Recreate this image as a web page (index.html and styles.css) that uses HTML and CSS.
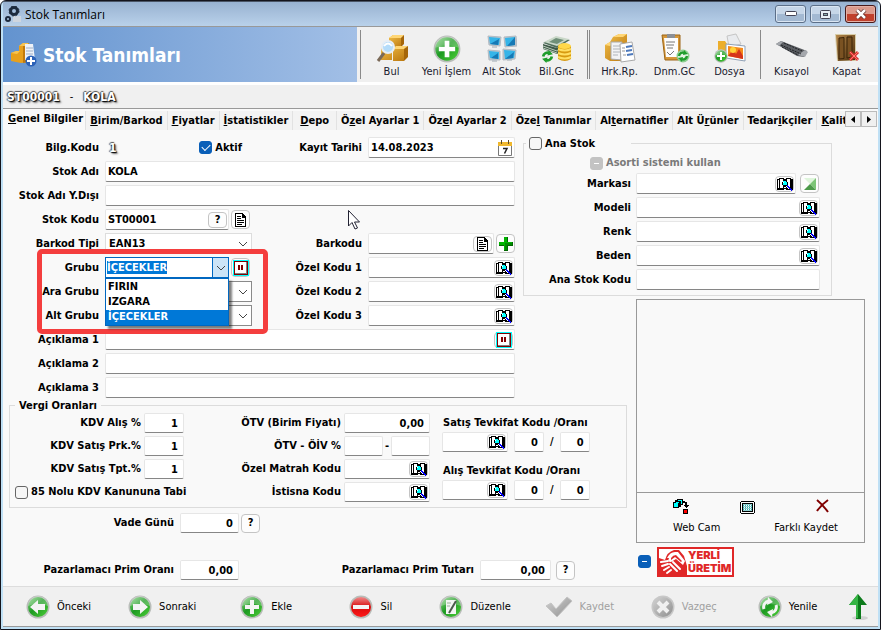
FILE: index.html
```html
<!DOCTYPE html>
<html lang="tr">
<head>
    <meta charset="UTF-8">
    <meta name="viewport" content="width=device-width, initial-scale=1.0">
    <title>Stok Tanımları</title>
    <link rel="stylesheet" href="styles.css">
</head>
<body>
    <!-- ikonlar -->
    <svg class="sprite" aria-hidden="true">
        <defs>
            <linearGradient id="green" x1="0" y1="0" x2="1" y2="1">
                <stop offset="0" stop-color="#8fd88a"/>
                <stop offset=".45" stop-color="#1d9a22"/>
                <stop offset="1" stop-color="#4fd03a"/>
            </linearGradient>
            <linearGradient id="red" x1="0" y1="0" x2="0" y2="1">
                <stop offset="0" stop-color="#f08a8a"/>
                <stop offset=".5" stop-color="#d80c0c"/>
                <stop offset="1" stop-color="#ff1a1a"/>
            </linearGradient>
            <linearGradient id="gray" x1="0" y1="0" x2="1" y2="1">
                <stop offset="0" stop-color="#d2d2d2"/>
                <stop offset="1" stop-color="#8f8f8f"/>
            </linearGradient>
            <linearGradient id="gold" x1="0" y1="0" x2="1" y2="1">
                <stop offset="0" stop-color="#f3c04a"/>
                <stop offset="1" stop-color="#b8740c"/>
            </linearGradient>
            <linearGradient id="wood" x1="0" y1="0" x2="1" y2="1">
                <stop offset="0" stop-color="#b5874a"/>
                <stop offset="1" stop-color="#4a2d0c"/>
            </linearGradient>
        </defs>
        <symbol id="book" viewBox="0 0 16 14" shape-rendering="crispEdges">
            <path fill="#000" d="M2 1h5v1h2V1h5v1h2v11H9v-1H7v1H0V2h2z"/>
            <path fill="#fff" d="M1 3h1v8H1zM3 2h3v9H3zM10 2h3v9h-3zM7 10h2v1H7z"/>
            <path fill="#000" d="M6 3h3v1h1v1h1v3h-1v1H6V8H5V5h1z"/>
            <path fill="#0ff" d="M6 4h3v1h1v3H6z"/>
            <path fill="#fff" d="M6 5h1v1H6zM9 9h1v1h1v1h1v1h-1v-1h-1v-1H9z"/>
            <path fill="#00f" d="M10 8h1v1h1v1h1v1h1v1h1v2h-1v-1h-1v-1h-1v-1h-1v-1h-1z"/>
        </symbol>
        <symbol id="page" viewBox="0 0 12 14" shape-rendering="crispEdges">
            <path fill="#000" d="M1 0h7v1h1v1h1v1h1v11H0V0z"/>
            <path fill="#fff" d="M1 1h6v4h3v8H1z"/>
            <path fill="#000" d="M2 3h4v1H2zM2 5h4v1H2zM2 7h7v1H2zM2 9h7v1H2zM2 11h5v1H2zM8 2h1v2H8z"/>
        </symbol>
        <symbol id="pause" viewBox="0 0 16 16" shape-rendering="crispEdges">
            <path fill="#0ff" d="M0 0h16v16H0z"/>
            <path fill="#800000" d="M1 1h14v14H1z"/>
            <path fill="#808080" d="M2 2h12v12H2z"/>
            <path fill="#fff" d="M2 2h11v11H2z"/>
            <path fill="#800000" d="M5 5h2v5H5zM8 5h2v5H8z"/>
        </symbol>
        <symbol id="plus" viewBox="0 0 14 14" shape-rendering="crispEdges">
            <path fill="#060" d="M5 0h4v5h5v4H9v5H5V9H0V5h5z"/>
            <path fill="#00b400" d="M5 0h3v5h5v3H8v5H5V8H0V5h5z"/>
            <path fill="#008a00" d="M6 6h7v2H8v5H6z"/>
        </symbol>
        <symbol id="chevron" viewBox="0 0 10 6">
            <path d="M1 1l4 4 4-4" fill="none" stroke="#444"/>
        </symbol>
        <symbol id="calendar" viewBox="0 0 14 16">
            <path fill="#fff" stroke="#777" d="M.5 3.500h13v12H.5z"/>
            <path fill="#f0b82e" d="M0 2h14v4H0z"/>
            <path fill="#5b4a2a" d="M3 0h1v4H3zM10 0h1v4h-1z"/>
            <path d="M5 8.500h4l-2.500 5" fill="none" stroke="#222" stroke-width="1.500"/>
        </symbol>
        <symbol id="ball" viewBox="0 0 24 24">
            <circle cx="12" cy="12" r="11.500" fill="#b9bdb9"/>
            <circle cx="12" cy="12" r="10" fill="url(#green)"/>
            <path fill="#fff" opacity=".25" d="M2 11a10 10 0 0 1 20 0q-10-4-20 0z"/>
        </symbol>
        <symbol id="boxes" viewBox="0 0 32 28">
            <path fill="url(#gold)" d="M13 3l4-3h11l-3 3v9H13z"/>
            <path fill="#ffd675" d="M13 3l4-3h11l-3 3z"/>
            <path fill="#a5660a" d="M25 3l3-3v9l-3 3z"/>
            <path fill="url(#gold)" d="M5 14l4-3h9l-2 3v11H5zM17 14l3-3h12l-4 3v12H17z"/>
            <path fill="#ffd675" d="M5 14l4-3h9l-2 3zM17 14l3-3h12l-4 3z"/>
            <path fill="#a5660a" d="M28 14l4-3v11l-4 4z"/>
        </symbol>
        <symbol id="cycle" viewBox="0 0 12 12">
            <path fill="none" stroke="#1f9d2c" stroke-width="2.500" d="M2 6a4 4 0 0 1 6-3M10 6a4 4 0 0 1-6 3"/>
            <path fill="#1f9d2c" d="M7 0l4 4-5 1zM5 12L1 8l5-1z"/>
        </symbol>
    </svg>

    <div class="window">
        <header class="titlebar">
            <svg width="17" height="17" viewBox="0 0 17 17">
                <path fill="#cfd6df" d="M8 10h8v6H8z"/>
                <circle cx="9" cy="5" r="3.500" fill="none" stroke="#1d2a3d" stroke-width="3"/>
                <circle cx="9" cy="5" r="5" fill="none" stroke="#1d2a3d" stroke-width="1" stroke-dasharray="2 2"/>
                <circle cx="3" cy="13" r="2" fill="none" stroke="#1d2a3d" stroke-width="2"/>
            </svg>
            <span class="caption">Stok Tanımları</span>
            <div class="window-buttons">
                <button aria-label="Küçült"><svg width="12" height="6"><rect x=".5" y=".5" width="11" height="4" rx="1" fill="#fff" stroke="#445"/></svg></button>
                <button aria-label="Büyüt"><svg width="11" height="9"><rect x=".5" y=".5" width="10" height="8" rx="1" fill="#e8eef5" stroke="#445"/><rect x="3.500" y="3.500" width="4" height="2" fill="#8aa" stroke="#445"/></svg></button>
                <button class="close" aria-label="Pencereyi kapat"><svg width="12" height="10"><path d="M2 1l8 8M10 1L2 9" stroke="#5a2a26" stroke-width="4"/><path d="M2 1l8 8M10 1L2 9" stroke="#fff" stroke-width="2.500"/></svg></button>
            </div>
        </header>

        <div class="toolbar">
            <div class="banner">
                <svg width="26" height="24" viewBox="0 0 26 24">
                    <path fill="#e8a01c" d="M0 10l5-2h3V3l4-3h6v19l-8 1-10-2z"/>
                    <path fill="#c27a0c" d="M12 0h6v19l-6 1z"/>
                    <path fill="#f7c452" d="M0 10l5-2h4l-3 3zM8 3l4-3h6l-4 3z"/>
                    <path fill="#eef2f8" d="M14 1h8l2 16H14z"/>
                    <path stroke="#9fb0c8" d="M15 5h7M15 8h7M15 11h7"/>
                    <circle cx="20" cy="18" r="5.500" fill="#2c62b8"/>
                    <path stroke="#fff" stroke-width="2" d="M20 14v8M16 18h8"/>
                </svg>
                <h1>Stok Tanımları</h1>
            </div>
            <div class="tool-group">
                <button>
                    <svg width="32" height="28" viewBox="0 0 32 28"><use href="#boxes"/><path stroke="#7b6a58" stroke-width="3" d="M8 18l-6 8"/><circle cx="12" cy="12" r="6" fill="#b4dcfa" stroke="#e6edf5" stroke-width="2"/><path d="M8 11q4-5 8 0" fill="none" stroke="#fff" stroke-width="2"/></svg>
                    Bul
                </button>
                <button>
                    <svg width="28" height="28" viewBox="0 0 24 24"><use href="#ball"/><path fill="#fff" d="M10 5h4v5h5v4h-5v5h-4v-5H5v-4h5z"/></svg>
                    Yeni İşlem
                </button>
                <button>
                    <svg width="30" height="28" viewBox="0 0 30 28">
                        <path fill="#c6cbd0" d="M5 10h5v3H5zM21 9h5v3h-5zM5 24h5v3H5zM20 23h5v3h-5z"/>
                        <path fill="#b9c2ca" stroke="#b3bbc3" d="M1 1l13 1-1 9-11-1zM17 2l12-1 1 10-12 1zM1 15l12 1v9H2zM16 14l13 1-1 9-12 1z"/>
                        <path fill="#35b4e8" d="M2 2l11 1-1 7-9-1zM18 3l10-1v8l-9 1zM2 16l10 1v7l-9-1zM17 15l11 1-1 7-9 1z"/>
                        <path fill="#1679b5" d="M3 9l9-5-1 6zM20 11l8-9v8zM4 23l7-5v6zM18 24l9-7-1 6z"/>
                    </svg>
                    Alt Stok
                </button>
                <button>
                    <svg width="32" height="28" viewBox="0 0 32 28">
                        <path fill="#4f6e5a" d="M2 8L15 2l14 3-13 8z"/>
                        <path fill="#cad8c9" d="M3 7L15 1l13 3-12 7z"/>
                        <path fill="#6f8f78" d="M8 7l7-4 8 2-7 4z"/>
                        <path fill="#3f5a48" d="M2 9l14 4 6-3v6l-6 3L2 14z"/>
                        <path stroke="#b9cbbb" fill="none" d="M2 11l14 5 6-3M2 13l14 5"/>
                        <path fill="#d79a10" d="M17 11h13v13q-6 4-13 0z"/>
                        <path stroke="#ffdf63" stroke-width="2" fill="none" d="M17 14q7 3 13 0M17 18q7 3 13 0M17 22q7 3 13 0"/>
                        <ellipse cx="23.500" cy="11" rx="6.500" ry="3" fill="#ffd84a"/>
                        <use href="#cycle" x="0" y="15" width="13" height="13"/>
                    </svg>
                    Bil.Gnc
                </button>
            </div>
            <div class="tool-group double">
                <button>
                    <svg width="32" height="30" viewBox="0 0 32 30">
                        <path fill="url(#gold)" d="M1 12l5-3 3-5 6-3h8v27H6l-5-3z"/>
                        <path fill="#ffd675" d="M9 4l6-3h8l-4 3zM1 12l5-3h5l-5 4z"/>
                        <path fill="#f2f3f5" stroke="#a9a9a9" d="M7 9h11v18l-11-1z"/>
                        <path stroke="#b0b4ba" d="M9 13h7M9 16h7M9 19h7M9 22h5"/>
                        <path fill="#fff" stroke="#a9a9a9" d="M16 11l12-2 3 18-14 2z"/>
                        <path stroke="#4d79bb" stroke-width="2" d="M22 14l6-1M22 18l6-1M23 22l6-1"/>
                        <path stroke="#999" d="M18 15h3M18 18h3M19 22h3"/>
                    </svg>
                    Hrk.Rp.
                </button>
                <button>
                    <svg width="30" height="30" viewBox="0 0 30 30">
                        <path fill="#d6983a" stroke="#9b6516" d="M2 2h18v25H5z"/>
                        <path fill="#fdfdfd" d="M4 5h14v19H6z"/>
                        <path fill="#8c9096" d="M7 1h8v4H7z"/>
                        <path stroke="#777" d="M6 9h9M6 12h8M7 15h6M7 19l3 3 4-4" fill="none"/>
                        <circle cx="23" cy="23" r="6.500" fill="#8fcf90"/>
                        <circle cx="23" cy="23" r="5" fill="#e4f4e4"/>
                        <use href="#cycle" x="17" y="17" width="12" height="12"/>
                    </svg>
                    Dnm.GC
                </button>
                <button>
                    <svg width="32" height="30" viewBox="0 0 32 30">
                        <path fill="#ecae2c" d="M4 8h7l2 3h8v14H4z"/>
                        <path fill="#e9ebee" stroke="#c5c5c5" d="M13 3l9-2 5 10-12 3z"/>
                        <path fill="#fff" stroke="#8fa0b5" d="M12 11l19 2v15l-19-3z"/>
                        <path fill="#f58a1b" d="M14 13l15 2v11l-15-3z"/>
                        <path fill="#d6341b" d="M14 23l5-6 3 4 3-5 4 7v3z"/>
                        <circle cx="19" cy="17" r="3" fill="#ffd23a"/>
                        <use href="#ball" x="0" y="16" width="14" height="14"/>
                        <path fill="#fff" d="M6 19h2v3h3v2H8v3H6v-3H3v-2h3z"/>
                    </svg>
                    Dosya
                </button>
            </div>
            <div class="tool-group">
                <button>
                    <svg width="32" height="28" viewBox="0 0 32 28">
                        <path fill="#5b5e63" d="M0 9l5-3 26 10-3 6-7-1z"/>
                        <path fill="#a5a8ad" d="M0 9l5-3 2 1-4 4zM22 20l7-5 3 2-3 5z"/>
                        <path stroke="#1f2124" stroke-width="1" stroke-dasharray="2 1" d="M5 10l20 9M8 8l18 8M6 12l16 8"/>
                    </svg>
                    Kısayol
                </button>
                <button>
                    <svg width="28" height="30" viewBox="0 0 28 30">
                        <path fill="#d8cda8" d="M2 1h21v27H4z"/>
                        <path fill="url(#wood)" d="M3 2h19v25l-17 1z"/>
                        <path fill="#7a5222" stroke="#3b2409" d="M6 5l5-.5v21L6 26zM14 4h5v20l-5 1z"/>
                        <path stroke="#d83030" stroke-width="3" d="M17 19l8 8M25 19l-8 8"/>
                        <path stroke="#ff7a6e" d="M17 19l8 8M25 19l-8 8"/>
                    </svg>
                    Kapat
                </button>
            </div>
        </div>

        <div class="record"><b class="glow">ST00001</b><span>-</span><b class="glow">KOLA</b></div>

        <nav class="tabs">
            <div class="tab-list">
                <a href="#" class="active"><u>G</u>enel Bilgiler</a>
                <a href="#"><u>B</u>irim/Barkod</a>
                <a href="#"><u>F</u>iyatlar</a>
                <a href="#"><u>İ</u>statistikler</a>
                <a href="#" class="wide"><u>D</u>epo</a>
                <a href="#">Ö<u>z</u>el Ayarlar 1</a>
                <a href="#">Öz<u>e</u>l Ayarlar 2</a>
                <a href="#">Öze<u>l</u> Tanımlar</a>
                <a href="#">Al<u>t</u>ernatifler</a>
                <a href="#">Alt Ü<u>r</u>ünler</a>
                <a href="#">Tedar<u>i</u>kçiler</a>
                <a href="#"><u>K</u>alite</a>
            </div>
            <button aria-label="Önceki sekmeler"><svg width="4" height="7"><path d="M4 0v7L0 3.500z"/></svg></button>
            <button aria-label="Sonraki sekmeler"><svg width="4" height="7"><path d="M0 0v7l4-3.500z"/></svg></button>
        </nav>

        <main class="content">
            <section class="general">
                <label>Bilg.Kodu</label>
                <div class="cell code-row">
                    <b class="glow">1</b>
                    <label class="check"><input type="checkbox" checked> Aktif</label>
                </div>
                <label for="tarih">Kayıt Tarihi</label>
                <div class="field">
                    <input type="text" id="tarih" value="14.08.2023">
                    <button class="bare" aria-label="Takvim"><svg width="14" height="16"><use href="#calendar"/></svg></button>
                </div>

                <label for="ad">Stok Adı</label>
                <div class="field full"><input type="text" id="ad" value="KOLA"></div>

                <label for="adYd">Stok Adı Y.Dışı</label>
                <div class="field full"><input type="text" id="adYd"></div>

                <label for="kod">Stok Kodu</label>
                <div class="cell full">
                    <div class="field short"><input type="text" id="kod" value="ST00001"><button class="mini">?</button></div>
                    <button class="mini" aria-label="Kod ver"><svg width="12" height="14"><use href="#page"/></svg></button>
                </div>

                <label for="barkodTipi">Barkod Tipi</label>
                <div class="select">
                    <select id="barkodTipi"><option>EAN13</option></select>
                    <svg width="10" height="6"><use href="#chevron"/></svg>
                </div>
                <label for="barkod">Barkodu</label>
                <div class="cell">
                    <div class="field"><input type="text" id="barkod"><button class="mini" aria-label="Barkod ver"><svg width="12" height="14"><use href="#page"/></svg></button></div>
                    <button class="mini" aria-label="Barkod ekle"><svg width="14" height="14"><use href="#plus"/></svg></button>
                </div>

                <label for="grup">Grubu</label>
                <div class="cell group-cell">
                    <div class="combo">
                        <input type="text" id="grup" value="İÇECEKLER" role="combobox" aria-expanded="true" aria-controls="grupListe">
                        <button aria-label="Listeyi aç"><svg width="10" height="6"><use href="#chevron"/></svg></button>
                        <ul id="grupListe" class="options" role="listbox">
                            <li role="option">FIRIN</li>
                            <li role="option">IZGARA</li>
                            <li role="option" aria-selected="true">İÇECEKLER</li>
                        </ul>
                    </div>
                    <button class="mini" aria-label="Grup tanımla"><svg width="16" height="16"><use href="#pause"/></svg></button>
                    <div class="highlight"></div>
                </div>
                <label for="ozel1">Özel Kodu 1</label>
                <div class="field"><input type="text" id="ozel1"><button class="mini" aria-label="Ara"><svg width="16" height="14"><use href="#book"/></svg></button></div>

                <label for="araGrup">Ara Grubu</label>
                <div class="select boxed">
                    <select id="araGrup"><option></option></select>
                    <svg width="10" height="6"><use href="#chevron"/></svg>
                </div>
                <label for="ozel2">Özel Kodu 2</label>
                <div class="field"><input type="text" id="ozel2"><button class="mini" aria-label="Ara"><svg width="16" height="14"><use href="#book"/></svg></button></div>

                <label for="altGrup">Alt Grubu</label>
                <div class="select boxed">
                    <select id="altGrup"><option></option></select>
                    <svg width="10" height="6"><use href="#chevron"/></svg>
                </div>
                <label for="ozel3">Özel Kodu 3</label>
                <div class="field"><input type="text" id="ozel3"><button class="mini" aria-label="Ara"><svg width="16" height="14"><use href="#book"/></svg></button></div>

                <label for="aciklama1">Açıklama 1</label>
                <div class="field full"><input type="text" id="aciklama1"><button class="mini" aria-label="Açıklama seç"><svg width="16" height="16"><use href="#pause"/></svg></button></div>

                <label for="aciklama2">Açıklama 2</label>
                <div class="field full"><input type="text" id="aciklama2"></div>

                <label for="aciklama3">Açıklama 3</label>
                <div class="field full"><input type="text" id="aciklama3"></div>

                <svg class="pointer" width="14" height="20" viewBox="0 0 14 20"><path fill="#fff" stroke="#223" d="M.5.5v15.500l3.500-3.500 3 6.500 2.500-1-3-6h5z"/></svg>
            </section>

            <fieldset class="parent">
                <legend><label class="check"><input type="checkbox"> Ana Stok</label></legend>
                <label class="check muted"><input type="checkbox" class="mixed" disabled> Asorti sistemi kullan</label>
                <label for="marka">Markası</label>
                <div class="cell brand">
                    <div class="field"><input type="text" id="marka"><button class="mini" aria-label="Ara"><svg width="16" height="14"><use href="#book"/></svg></button></div>
                    <button class="mini" aria-label="Marka rengi"><svg width="12" height="12"><path fill="#dff5dc" d="M0 0h12L6 6z"/><path fill="#7cc576" d="M12 0v12L6 6z"/><path fill="#4c9a4a" d="M0 12l6-6 6 6z"/></svg></button>
                </div>
                <label for="model">Modeli</label>
                <div class="field"><input type="text" id="model"><button class="mini" aria-label="Ara"><svg width="16" height="14"><use href="#book"/></svg></button></div>
                <label for="renk">Renk</label>
                <div class="field"><input type="text" id="renk"><button class="mini" aria-label="Ara"><svg width="16" height="14"><use href="#book"/></svg></button></div>
                <label for="beden">Beden</label>
                <div class="field"><input type="text" id="beden"><button class="mini" aria-label="Ara"><svg width="16" height="14"><use href="#book"/></svg></button></div>
                <label for="anaKod">Ana Stok Kodu</label>
                <div class="field"><input type="text" id="anaKod"></div>
            </fieldset>

            <section class="picture">
                <div class="frame"></div>
                <div class="picture-tools">
                    <button>
                        <svg width="16" height="16" shape-rendering="crispEdges"><path d="M4 0h6v6H8v2H6v1H0V3h2V1h2z"/><path fill="#0ff" d="M5 1h4v4H8V2H5zM3 3h3v1H4v3H3zM1 4h4v4H1z"/><path d="M10 2h2v1h2v3h2l-3 3-3-3h2V4h-2z"/><path d="M10 10h5v5h-5z"/><path fill="red" d="M11 11h3v3h-3z"/></svg>
                        Web Cam
                    </button>
                    <button aria-label="Resim seç">
                        <svg width="15" height="13" shape-rendering="crispEdges"><path d="M1 0h13v1h1v11h-1v1H1v-1H0V1h1z"/><path fill="#fff" d="M1 1h13v11H1z"/><path d="M2 2h11v9H2z"/><path fill="#fff" d="M3 3h9v7H3z"/><path stroke="#3aa" stroke-dasharray="1 1" d="M3 4h9M3 6h9M3 8h9"/><path stroke="#8fd0d0" d="M3 3.500h9M3 5.500h9M3 7.500h9M3 9.500h9"/></svg>
                    </button>
                    <button>
                        <svg width="14" height="14"><path d="M1 1q6 5 11 12M12 1Q5 6 1 12" fill="none" stroke="#800000" stroke-width="2"/></svg>
                        Farklı Kaydet
                    </button>
                </div>
                <div class="origin">
                    <input type="checkbox" class="mixed" aria-label="Yerli üretim">
                    <div class="yerli">
                        <svg width="28" height="26" viewBox="0 0 28 26">
                            <path fill="#e02828" d="M0 9l6 2q2-8 9-10h5l5 6 3 10v9H0z"/>
                            <path fill="#fff" d="M8 9q3-6 8-6h3l7 9-2 4-7-6-5 3q-4 0-2-4z"/>
                            <path fill="#e02828" d="M12 9q2-3 5-3l6 6-1 1-6-5-4 3z"/>
                            <path fill="none" stroke="#fff" stroke-width="2" stroke-linecap="round" d="M14 13l7 7M11 15l7 7M2 13l7-1M3 17l6-2M5 21l5-3M8 24l4-3"/>
                        </svg>
                        <span>YERLİ<br>ÜRETİM</span>
                    </div>
                </div>
            </section>

            <fieldset class="tax">
                <legend>Vergi Oranları</legend>
                <div class="tax-a">
                    <label for="kdvAlis">KDV Alış %</label>
                    <div class="field num"><input type="text" id="kdvAlis" value="1"></div>
                    <label for="kdvPrk">KDV Satış Prk.%</label>
                    <div class="field num"><input type="text" id="kdvPrk" value="1"></div>
                    <label for="kdvTpt">KDV Satış Tpt.%</label>
                    <div class="field num"><input type="text" id="kdvTpt" value="1"></div>
                    <label class="check"><input type="checkbox"> 85 Nolu KDV Kanununa Tabi</label>
                </div>
                <div class="tax-b">
                    <label for="otv">ÖTV (Birim Fiyatı)</label>
                    <div class="field num"><input type="text" id="otv" value="0,00"></div>
                    <label for="oiv">ÖTV - ÖİV %</label>
                    <div class="cell">
                        <div class="field"><input type="text" id="oiv"></div>-<div class="field"><input type="text" aria-label="ÖİV %"></div>
                    </div>
                    <label for="matrah">Özel Matrah Kodu</label>
                    <div class="field"><input type="text" id="matrah"><button class="mini" aria-label="Ara"><svg width="16" height="14"><use href="#book"/></svg></button></div>
                    <label for="istisna">İstisna Kodu</label>
                    <div class="field"><input type="text" id="istisna"><button class="mini" aria-label="Ara"><svg width="16" height="14"><use href="#book"/></svg></button></div>
                </div>
                <div class="tax-c">
                    <label for="satisTev">Satış Tevkifat Kodu /Oranı</label>
                    <div class="cell">
                        <div class="field code"><input type="text" id="satisTev"><button class="mini" aria-label="Ara"><svg width="16" height="14"><use href="#book"/></svg></button></div>
                        <div class="field num"><input type="text" value="0" aria-label="Pay"></div>/<div class="field num"><input type="text" value="0" aria-label="Payda"></div>
                    </div>
                    <label for="alisTev">Alış Tevkifat Kodu /Oranı</label>
                    <div class="cell">
                        <div class="field code"><input type="text" id="alisTev"><button class="mini" aria-label="Ara"><svg width="16" height="14"><use href="#book"/></svg></button></div>
                        <div class="field num"><input type="text" value="0" aria-label="Pay"></div>/<div class="field num"><input type="text" value="0" aria-label="Payda"></div>
                    </div>
                </div>
            </fieldset>

            <section class="terms">
                <label for="vade">Vade Günü</label>
                <div class="cell"><div class="field num"><input type="text" id="vade" value="0"></div><button class="mini">?</button></div>
                <label for="primOran" class="first">Pazarlamacı Prim Oranı</label>
                <div class="cell"><div class="field num"><input type="text" id="primOran" value="0,00"></div></div>
                <label for="primTutar">Pazarlamacı Prim Tutarı</label>
                <div class="cell amount"><div class="field num"><input type="text" id="primTutar" value="0,00"></div><button class="mini">?</button></div>
            </section>
        </main>

        <footer class="actions">
            <button><svg width="24" height="24"><use href="#ball"/><path fill="#f4f4f4" d="M4 12l8-7v4h7v6h-7v4z"/></svg>Önceki</button>
            <button><svg width="24" height="24"><use href="#ball"/><path fill="#f4f4f4" d="M20 12l-8-7v4H5v6h7v4z"/></svg>Sonraki</button>
            <button><svg width="24" height="24"><use href="#ball"/><path fill="#f4f4f4" d="M10 5h4v5h5v4h-5v5h-4v-5H5v-4h5z"/></svg>Ekle</button>
            <button><svg width="24" height="24"><circle cx="12" cy="12" r="11.500" fill="#b9bdb9"/><circle cx="12" cy="12" r="10" fill="url(#red)"/><path fill="#f4f4f4" d="M4 10h16v4H4z"/></svg>Sil</button>
            <button><svg width="24" height="24"><use href="#ball"/><path fill="#f2f5f2" d="M7 5h10v14H7z"/><path stroke="#4a5a4a" stroke-width="2" d="M17 6l-7 12"/><path stroke="#9bb09b" d="M8 8h4M8 11h3"/></svg>Düzenle</button>
            <button disabled><svg width="28" height="24"><path fill="url(#gray)" stroke="#c4c4c4" d="M1 11l5-3 5 6L22 2l5 4-15 16z"/></svg>Kaydet</button>
            <button disabled><svg width="24" height="24"><circle cx="12" cy="12" r="11.500" fill="#c8c8c8"/><circle cx="12" cy="12" r="10" fill="url(#gray)"/><path stroke="#f0f0f0" stroke-width="4" d="M7 7l10 10M17 7L7 17"/></svg>Vazgeç</button>
            <button><svg width="24" height="24"><use href="#ball"/><path fill="none" stroke="#f4f4f4" stroke-width="3" d="M6 14a6 6 0 0 1 5-8M18 10a6 6 0 0 1-5 8"/><path fill="#f4f4f4" d="M10 2l5 5-6 3zM14 22l-5-5 6-3z"/></svg>Yenile</button>
            <button aria-label="Yukarı"><svg width="20" height="28"><ellipse cx="11" cy="25" rx="8" ry="2" fill="#d2d2d2"/><path fill="#0d7a1c" d="M9 1l9 11h-6v14H7V12H0z"/><path fill="#35b544" d="M9 1L0 12h7v13h2z"/></svg></button>
        </footer>
    </div>

    <script>
        // açık listedeki grup adı seçili gelsin
        const grup = document.getElementById('grup');
        grup.focus();
        grup.select();
    </script>
</body>
</html>
```
FILE: styles.css
```css
* {
    box-sizing: border-box;
}
body {
    margin: 0;
    font-family: "DejaVu Sans Condensed", "Noto Sans", sans-serif;
    font-size: 11px;
    line-height: 14px;
    color: #000;
}
button, input, select {
    font: inherit;
    color: inherit;
    margin: 0;
    padding: 0;
}
button {
    border: 0;
    background: none;
}
svg {
    display: block;
    flex: none;
}
.sprite {
    position: absolute;
    width: 0;
    height: 0;
}
.window {
    display: flex;
    flex-direction: column;
    min-height: 100vh;
    padding: 0 2px 2px;
    border: 1px solid #14141c;
    border-radius: 6px 6px 0 0;
    background: #bfe0f5;
}

/* başlık çubuğu */
.titlebar {
    display: flex;
    align-items: center;
    gap: 3px;
    height: 26px;
    padding: 0 2px;
    background: linear-gradient(#98b2d1, #b9d1ea);
    border-top: 1px solid #4a5566;
    border-bottom: 1px solid #999;
}
.caption {
    flex: 1;
    padding-top: 1px;
    font-family: "Open Sans", sans-serif;
    font-size: 12px;
}
.window-buttons {
    display: flex;
    gap: 4px;
}
.window-buttons button {
    display: flex;
    align-items: center;
    justify-content: center;
    width: 31px;
    height: 18px;
    border: 1px solid #5c6f88;
    border-radius: 3px;
    background: linear-gradient(#c6d6e8 50%, #a3b9d2 50%);
    box-shadow: inset 0 0 0 1px #dbe6f2;
}
.window-buttons .close {
    border-color: #4a1a1a;
    background: linear-gradient(#dc9a8c 50%, #c0402c 50%);
    box-shadow: inset 0 0 0 1px #e5b0a5;
}

/* üst araç çubuğu */
.toolbar {
    display: flex;
    height: 55px;
    background: #f0f0f0;
}
.banner {
    flex: 1;
    display: flex;
    align-items: center;
    gap: 6px;
    padding-left: 8px;
    background: linear-gradient(90deg, #6393cf, #a2bfe6);
}
.banner h1 {
    margin: 0;
    font-size: 19px;
    line-height: 24px;
    color: #fff;
}
.tool-group {
    display: flex;
    margin: 3px 0 3px 3px;
    padding-left: 3px;
    border-left: 1px solid #8a8a8a;
}
.tool-group.double {
    border-left: 3px double #8a8a8a;
    padding-left: 2px;
}
.tool-group:last-child {
    padding-right: 4px;
}
.tool-group button {
    display: flex;
    flex-direction: column;
    align-items: center;
    justify-content: flex-end;
    gap: 2px;
    width: 55px;
    white-space: nowrap;
    color: #1a1a2e;
}
.record {
    display: flex;
    gap: 10px;
    height: 27px;
    padding: 5px 4px 0;
    background: #f0f0f0;
    border-top: 3px solid #fff;
    border-bottom: 1px solid #999;
}
.glow {
    font-size: 12px;
    color: #fff;
    text-shadow: 1px 1px 1px #000, -1px 0 1px #555, 0 -1px 1px #555, 2px 2px 2px #777;
}

/* sekmeler */
.tabs {
    display: flex;
    height: 21px;
    padding: 2px 1px 0 0;
    background: #f9f9f9;
}
.tab-list {
    flex: 1;
    display: flex;
    overflow: hidden;
    font-weight: bold;
    white-space: nowrap;
}
.tabs a {
    padding: 3px 4px 2px;
    color: #000;
    text-decoration: none;
    background: #f3f3f3;
    border-right: 1px solid #e2e2e2;
}
.tabs a.active {
    padding: 1px 2px 0 5px;
    background: #f9f9f9;
}
.tabs a.wide {
    padding: 3px 7px 2px;
}
.tabs button {
    display: flex;
    align-items: center;
    justify-content: center;
    width: 16px;
    height: 16px;
    background: #f0f0f0;
    border: 1px solid #bbb;
}

/* form */
.content {
    flex: 1;
    display: grid;
    grid-template-columns: 1fr 103px 229px;
    grid-template-rows: auto 1fr auto auto;
    column-gap: 9px;
    padding: 7px 13px 6px 6px;
    background: #f9f9f9;
    border-bottom: 1px solid #ddd;
    font-weight: bold;
}
.content label {
    text-align: right;
    white-space: nowrap;
}
.general {
    grid-area: 1 / 1 / 3 / 2;
    position: relative;
    display: grid;
    grid-template-columns: 90px 1fr 104px 1fr;
    grid-auto-rows: 21px;
    gap: 3px 6px;
    align-items: center;
    align-content: start;
}
.full {
    grid-column: 2 / -1;
}
.cell {
    display: flex;
    align-items: center;
    gap: 2px;
    min-width: 0;
}
.field {
    flex: 1;
    display: flex;
    align-items: center;
    min-width: 0;
    height: 21px;
    padding-right: 1px;
    background: #fff;
    border: 1px solid #e6e6e6;
    border-bottom-color: #868686;
    border-radius: 2px;
}
.field.short {
    flex: none;
    width: 124px;
}
.field input {
    flex: 1;
    width: 0;
    min-width: 0;
    height: 16px;
    padding: 0 2px;
    border: 0;
    outline: 0;
    background: none;
    font-weight: bold;
}
.num input {
    padding-right: 4px;
    text-align: right;
}
.mini {
    flex: none;
    display: flex;
    align-items: center;
    justify-content: center;
    width: 19px;
    height: 19px;
    border: 1px solid #c4c4c4;
    border-radius: 4px;
    background: #fdfdfd;
    font-weight: bold;
}
.field .mini {
    height: 16px;
}
.bare {
    margin-right: 1px;
}
.code-row {
    justify-content: space-between;
    padding: 0 10px 0 4px;
}
.check {
    display: flex;
    align-items: center;
    gap: 3px;
}
input[type="checkbox"] {
    appearance: none;
    flex: none;
    display: grid;
    place-items: center;
    width: 13px;
    height: 13px;
    border: 1px solid #666;
    border-radius: 3px;
    background: #f6f6f6;
}
input[type="checkbox"]:checked {
    background: #0a5fb8;
    border-color: #0a5fb8;
}
input[type="checkbox"]:checked::before {
    content: "";
    width: 7px;
    height: 4px;
    margin-bottom: 2px;
    border: solid #fff;
    border-width: 0 0 1px 1px;
    transform: rotate(-45deg);
}
input[type="checkbox"].mixed {
    background: #0a5fb8;
    border-color: #0a5fb8;
}
input[type="checkbox"].mixed::before {
    content: "";
    width: 5px;
    height: 1px;
    background: #fff;
}
input[type="checkbox"].mixed:disabled {
    background: #c3c3c3;
    border-color: #c3c3c3;
}

/* açılır kutular */
.select {
    display: flex;
    align-items: center;
    height: 21px;
    padding-right: 3px;
    background: #fff;
    border: 1px solid #ddd;
    border-bottom-color: #868686;
}
.select.boxed {
    border-color: #8a8a8a;
}
.select select {
    flex: 1;
    appearance: none;
    border: 0;
    outline: 0;
    padding: 0 3px;
    background: none;
    font-weight: bold;
}
.group-cell {
    position: relative;
}
.combo {
    position: relative;
    z-index: 1;
    display: flex;
    width: 124px;
    height: 21px;
    background: #fff;
    border: 1px solid #0067c0;
}
.combo input {
    flex: 1;
    width: 0;
    height: 15px;
    margin: 2px 0 0 1px;
    border: 0;
    outline: 0;
    font-weight: bold;
}
.combo input::selection {
    background: #0078d7;
    color: #fff;
}
.combo button {
    display: grid;
    place-items: center;
    width: 16px;
    background: #cce4f7;
    border-left: 1px solid #0067c0;
}
.options {
    position: absolute;
    top: 20px;
    left: -1px;
    right: -1px;
    margin: 0;
    padding: 1px 0 0;
    list-style: none;
    background: #fff;
    border: 1px solid #0067c0;
    box-shadow: 3px 3px 2px rgba(0, 0, 0, 0.5);
}
.options li {
    height: 15px;
    padding: 0 2px;
}
.options [aria-selected] {
    background: #0078d7;
    color: #fff;
}
.highlight {
    position: absolute;
    top: -8px;
    left: -68px;
    width: 231px;
    height: 85px;
    border: 5px solid #f43e3e;
    border-radius: 5px;
    pointer-events: none;
}
.pointer {
    position: absolute;
    left: 339px;
    top: 73px;
}

/* gruplar */
fieldset {
    min-width: 0;
    margin: 0;
    border: 1px solid #dcdcdc;
}
.parent {
    grid-area: 1 / 2 / 2 / 4;
    display: grid;
    grid-template-columns: 107px 1fr;
    gap: 3px 5px;
    align-items: center;
    margin: 0 33px 0 -1px;
    padding: 6px 11px 5px 0;
}
.parent legend {
    width: 105px;
    margin-left: 2px;
    padding: 0 3px;
    line-height: 13px;
}
.parent .muted {
    grid-column: 1 / -1;
    height: 14px;
    margin-left: 66px;
    color: #7a7a7a;
}
.brand {
    gap: 4px;
    padding-right: 1px;
}
.tax {
    grid-area: 3 / 1 / 4 / 3;
    display: flex;
    padding: 1px 0 5px 5px;
}
.tax legend {
    padding: 0 4px;
    line-height: 13px;
}
.tax .field,
.terms .field {
    height: 20px;
}
.tax-a,
.tax-b {
    display: grid;
    grid-auto-rows: 20px;
    gap: 3px;
    align-items: center;
}
.tax-a {
    grid-template-columns: 126px 40px;
}
.tax-a .check {
    grid-column: 1 / -1;
}
.tax-b {
    grid-template-columns: 157px 86px;
    margin-right: 12px;
}
.tax-c {
    display: flex;
    flex-direction: column;
    padding-top: 2px;
}
.tax-c label {
    height: 17px;
    padding-left: 1px;
    text-align: left;
    line-height: 16px;
}
.tax-c .cell {
    margin-bottom: 11px;
    gap: 6px;
}
.tax-c .cell:last-child {
    margin-bottom: 0;
}
.tax-c .field {
    flex: none;
    width: 30px;
}
.tax-c .code {
    width: 66px;
}
.terms {
    grid-area: 4 / 1 / 5 / 3;
    display: grid;
    grid-template-columns: 165px 79px 209px 1fr;
    gap: 27px 6px;
    align-items: center;
    padding-top: 5px;
}
.terms .first {
    grid-column: 1;
}
.terms .field {
    flex: none;
    width: 59px;
}
.terms .amount {
    gap: 5px;
}
.terms .amount .field {
    width: 71px;
}

/* resim alanı */
.picture {
    grid-area: 2 / 3 / 5 / 4;
    display: flex;
    flex-direction: column;
    padding-top: 3px;
    font-weight: normal;
}
.frame {
    flex: 1;
    border: 1px solid #999;
    border-bottom: 0;
}
.picture-tools {
    display: flex;
    justify-content: space-between;
    height: 51px;
    padding: 6px 26px 0 36px;
    border: 1px solid #999;
}
.picture-tools button {
    display: flex;
    flex-direction: column;
    gap: 6px;
    height: 36px;
}
.picture-tools button:nth-child(2) {
    padding-top: 2px;
}
.picture-tools button:last-child svg {
    align-self: flex-end;
    height: 16px;
    margin-right: 8px;
}
.origin {
    display: flex;
    align-items: center;
    gap: 6px;
    height: 37px;
    padding: 4px 2px;
}
.yerli {
    display: flex;
    gap: 1px;
    width: 77px;
    height: 30px;
    border: 2px solid #e02828;
    background: #fff;
    color: #e02828;
    font-family: Inter, sans-serif;
    font-size: 11px;
    font-weight: 900;
    line-height: 13px;
}

/* alt düğmeler */
.actions {
    display: grid;
    grid-template-columns: 102fr 112fr 109fr 90fr 105fr 106fr 107fr 91fr 29fr;
    align-items: center;
    height: 40px;
    padding-left: 23px;
    background: #f0f0f0;
    border-bottom: 1px solid #999;
}
.actions button {
    display: flex;
    align-items: center;
    gap: 7px;
}
.actions button:disabled {
    color: #a0a0a0;
}
```
